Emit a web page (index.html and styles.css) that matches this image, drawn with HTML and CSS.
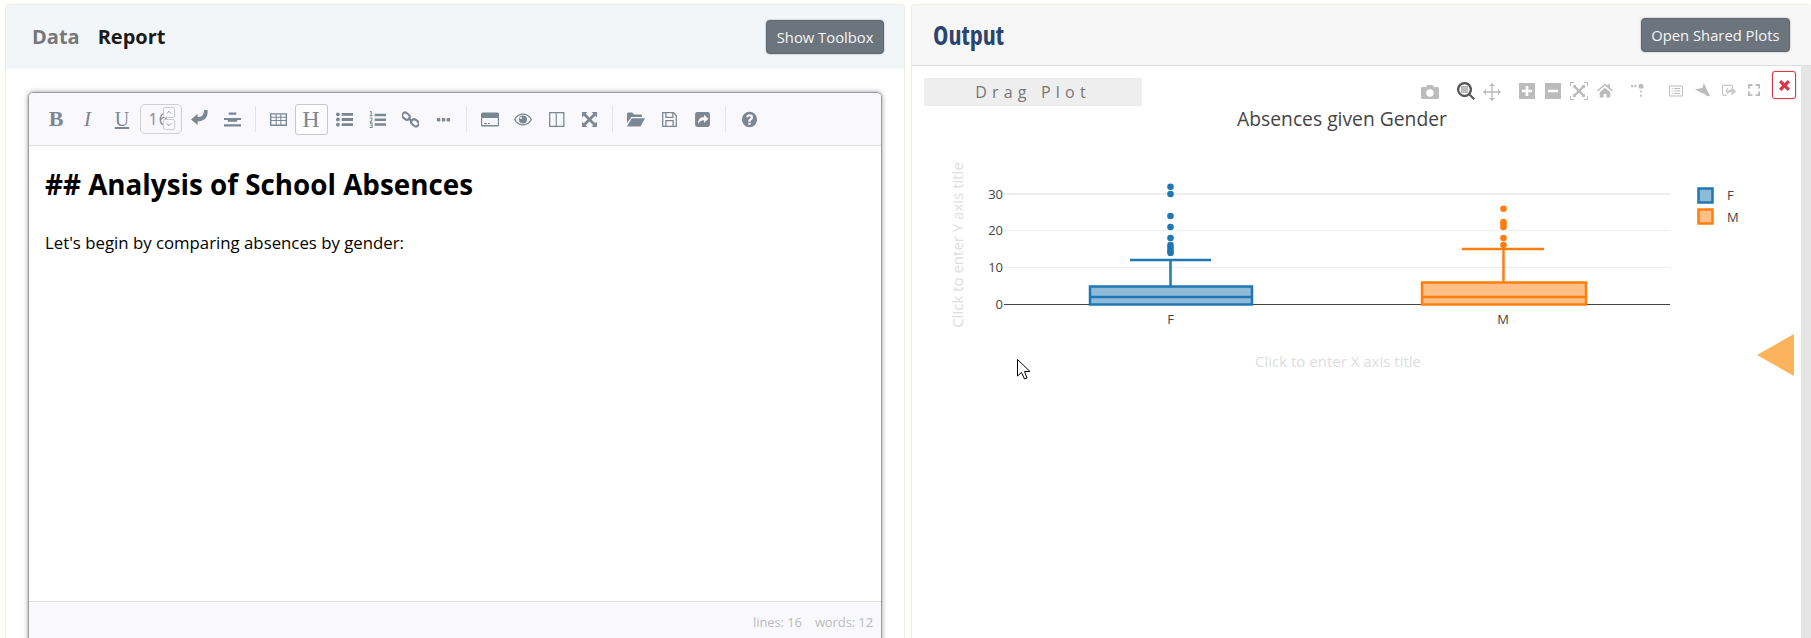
FILE: index.html
```html
<!DOCTYPE html>
<html lang="en">
<head>
<meta charset="utf-8">
<title>Report and Output</title>
<link rel="stylesheet" href="styles.css">
</head>
<body>
<main class="page">
  <section class="card left">
    <header class="head head-left">
      <nav class="tabs"><span class="tab muted">Data</span><span class="tab active">Report</span></nav>
      <button class="btn">Show Toolbox</button>
    </header>
    <div class="editor-wrap">
      <div class="editor">
        <div class="toolbar">
          <span class="tb t-serif"><b>B</b></span>
          <span class="tb t-serif t-i"><i>I</i></span>
          <span class="tb t-serif t-u">U</span>
          <span class="num"><span class="num-val">16</span><span class="spin"><span class="sp"><svg viewBox="0 0 10 6"><path d="M2 4.500 5 1.500 8 4.500"/></svg></span><span class="sp"><svg viewBox="0 0 10 6"><path d="M2 1.500 5 4.500 8 1.500"/></svg></span></span></span>
          <span class="tb"><svg class="ic ic-up" viewBox="0 0 18 18"><path d="M0 11 7 5V8.500C11 8.500 13 7.500 14 1H17.500C18.500 9 14 13 7 13V17Z"/></svg></span>
          <span class="tb"><svg class="ic" viewBox="0 0 18 18"><path d="M5 1.500h8v2.500H5zM0 7.500h18v2H0zM4 9.500h10v2H4zM0 14h18v2.500H0z"/></svg></span>
          <span class="sep sep-first"></span>
          <span class="tb"><svg class="ic" viewBox="0 0 16 16"><path fill-rule="evenodd" d="M0 2h16v12H0zM1.300 3.300v2.100h4v-2.100zM6.300 3.300v2.100h3.400v-2.100zM10.700 3.300v2.100h4v-2.100zM1.300 6.400v2.100h4v-2.100zM6.300 6.400v2.100h3.400v-2.100zM10.700 6.400v2.100h4v-2.100zM1.300 9.500v3.200h4v-3.200zM6.300 9.500v3.200h3.400v-3.200zM10.700 9.500v3.200h4v-3.200z"/></svg></span>
          <span class="tb tb-on t-serif t-h">H</span>
          <span class="tb"><svg class="ic" viewBox="0 0 18 18"><circle cx="2" cy="3.500" r="2"/><circle cx="2" cy="9" r="2"/><circle cx="2" cy="14.500" r="2"/><path d="M6 2h12v3H6zM6 7.500h12v3H6zM6 13h12v3H6z"/></svg></span>
          <span class="tb"><svg class="ic" viewBox="0 0 18 18"><path d="M6 3h12v2.500H6zM6 8h12v2.500H6zM6 13h12v2.500H6zM1 0h1.800v4.500H3.800V5.500H.8V4.500H1.800V1.200H1zM.8 7h2.800v3L2 11.500h1.800v1H.6v-1L2.600 9.500V8H.8zM.8 13h3v5H.8v-1H2.800v-1H1.600v-1H2.800v-1H.8z"/></svg></span>
          <span class="tb"><svg class="ic" viewBox="0 0 18 18"><g class="link"><rect x="0" y="2.500" width="8.500" height="6" rx="3" transform="rotate(40 4.250 5.500)"/><rect x="9.500" y="9.500" width="8.500" height="6" rx="3" transform="rotate(40 13.750 12.500)"/><path d="M6.500 7.500 11 11"/></g></svg></span>
          <span class="tb"><svg class="ic" viewBox="0 0 18 18"><rect x="2" y="7.500" width="3.600" height="3.600" rx=".8"/><rect x="7.200" y="7.500" width="3.600" height="3.600" rx=".8"/><rect x="12.400" y="7.500" width="3.600" height="3.600" rx=".8"/></svg></span>
          <span class="sep"></span>
          <span class="tb"><svg class="ic ic-w" viewBox="0 0 18 16"><path fill-rule="evenodd" d="M1.500 1h15A1.500 1.500 0 0 1 18 2.500v11a1.500 1.500 0 0 1-1.500 1.500h-15A1.500 1.500 0 0 1 0 13.500v-11A1.500 1.500 0 0 1 1.500 1zM1.200 6.500v7h15.600v-7zM3 11.500h3v1H3zM7 11.500h2v1H7z"/></svg></span>
          <span class="tb"><svg class="ic ic-w" viewBox="0 0 18 12"><path fill-rule="evenodd" d="M9 0c4 0 7.300 2.500 9 6-1.700 3.500-5 6-9 6s-7.300-2.500-9-6c1.700-3.500 5-6 9-6zM9 1.300C6 1.300 3 3 1.400 6 3 9 6 10.700 9 10.700S15 9 16.600 6C15 3 12 1.300 9 1.300zM9 2a4 4 0 1 1 0 8 4 4 0 0 1 0-8zM7 3.500a1 1 0 1 0 0 2 1 1 0 0 0 0-2z"/></svg></span>
          <span class="tb"><svg class="ic" viewBox="0 0 16 16"><path fill-rule="evenodd" d="M1 1h14.500v14H1zM2.200 2.200v11.600h5V2.200zM8.300 2.200v11.600h6V2.200z"/></svg></span>
          <span class="tb"><svg class="ic" viewBox="0 0 16 16"><path d="M1 1h5L4.400 2.600 8 6.200 11.600 2.600 10 1h5v5L13.400 4.400 9.800 8 13.400 11.600 15 10v5h-5l1.600-1.600L8 9.800 4.400 13.400 6 15H1v-5l1.600 1.600L6.200 8 2.600 4.400 1 6z"/></svg></span>
          <span class="sep"></span>
          <span class="tb"><svg class="ic ic-w" viewBox="0 0 18 14"><path d="M0 1.500C0 .7.700 0 1.500 0h3.700L7 2h6.500c.8 0 1.500.7 1.500 1.500V4.500H4.500L0 10.500zM4.800 5.800H18L13.500 14H0z"/></svg></span>
          <span class="tb"><svg class="ic" viewBox="0 0 16 16"><path fill-rule="evenodd" d="M1 1h11l3 3v11H1zM2.200 2.200v11.600h1.800V8.500h8v5.300h1.800V4.600L11.800 2.400V6.500H4V2.200zM5.200 2.200v3.100h5.400V2.200zM5.200 9.700v4.100h5.600V9.700z"/></svg></span>
          <span class="tb"><svg class="ic" viewBox="0 0 16 16"><path fill-rule="evenodd" d="M3 1h10a2 2 0 0 1 2 2v10a2 2 0 0 1-2 2H3a2 2 0 0 1-2-2V3a2 2 0 0 1 2-2zM9.500 3.500v2.300C6 5.800 3.500 7.500 4 12.500 5 10 6.500 8.700 9.500 8.700v2.300L13.500 7.200z"/></svg></span>
          <span class="sep"></span>
          <span class="tb"><svg class="ic" viewBox="0 0 16 16"><path fill-rule="evenodd" d="M8 .8a7.200 7.200 0 1 1 0 14.400A7.200 7.200 0 0 1 8 .8zM6.900 11v2h2.200v-2zM8 3C6.200 3 5 4 4.800 5.700l2 .4C7 5.300 7.300 4.900 8 4.900s1.100.4 1.100 1c0 .5-.3.8-1 1.300-.8.600-1.200 1.200-1.200 2.200V10h2.200v-.4c0-.5.200-.7.900-1.200.9-.6 1.400-1.300 1.400-2.500C11.400 4.200 10 3 8 3z"/></svg></span>
        </div>
        <div class="doc">
          <h1 class="doc-h">## Analysis of School Absences</h1>
          <p class="doc-p">Let's begin by comparing absences by gender:</p>
        </div>
        <div class="status"><span>lines: 16</span><span>words: 12</span></div>
      </div>
    </div>
  </section>

  <section class="card right">
    <header class="head head-right">
      <h2 class="output">Output</h2>
      <button class="btn">Open Shared Plots</button>
    </header>
    <div class="plot-area">
      <div class="drag">Drag Plot</div>
      <div class="modebar">
        <svg class="mb m-cam" viewBox="0 0 18 16"><path fill-rule="evenodd" d="M1.500 3H5L6.500 1h5L13 3h3.500C17.300 3 18 3.700 18 4.500v9c0 .8-.7 1.500-1.500 1.500h-15C.7 15 0 14.300 0 13.500v-9C0 3.700.7 3 1.500 3zM9 5.300a3.700 3.700 0 1 0 0 7.400 3.700 3.700 0 0 0 0-7.400z"/></svg>
        <svg class="mb m-zoom" viewBox="0 0 18 18"><path d="M7.500 0a7.500 7.500 0 0 1 6 12L18 16.500 16.500 18 12 13.500A7.500 7.500 0 1 1 7.500 0zM7.500 2.300a5.200 5.200 0 1 0 0 10.400 5.200 5.200 0 0 0 0-10.400z" fill-rule="evenodd"/><rect class="z-in" x="4" y="4" width="7" height="7"/></svg>
        <svg class="mb m-pan" viewBox="0 0 18 18"><path d="M9 0l3 3h-2.300v5.300H15V6l3 3-3 3V9.700H9.700V15H12l-3 3-3-3h2.300V9.700H3V12L0 9l3-3v2.300h5.300V3H6z"/></svg>
        <svg class="mb m-plus" viewBox="0 0 16 16"><path fill-rule="evenodd" d="M0 0h16v16H0zM6.700 3v3.700H3v2.600h3.700V13h2.600V9.300H13V6.700H9.300V3z"/></svg>
        <svg class="mb m-minus" viewBox="0 0 16 16"><path fill-rule="evenodd" d="M0 0h16v16H0zM3 6.700v2.600h10V6.700z"/></svg>
        <svg class="mb m-auto" viewBox="0 0 18 18"><path d="M0 0h4v1H1v3H0zM14 0h4v4h-1V1h-3zM0 14h1v3h3v1H0zM17 14h1v4h-4v-1h3zM3.500 3h3L5.600 3.900 9 7.200 12.400 3.900 11.500 3h3.500v3.500L14.100 5.600 10.800 9l3.300 3.400.9-.9V15h-3.500l.9-.9L9 10.800 5.600 14.100l.9.9H3v-3.500l.9.9L7.200 9 3.900 5.600 3 6.500z"/></svg>
        <svg class="mb m-home" viewBox="0 0 18 16"><path d="M9 0l3 2.600V1h2.500v3.800L18 8l-1 1.200L9 2.500 1 9.200 0 8zM3 10l6-5 6 5v6h-4.500v-4h-3v4H3z"/></svg>
        <svg class="mb m-spike" viewBox="0 0 18 18"><circle cx="12" cy="4" r="3"/><rect x="0" y="2.500" width="2.500" height="2.500"/><rect x="4" y="2.500" width="2.500" height="2.500"/><rect x="11" y="9" width="2" height="2.500"/><rect x="11" y="14" width="2" height="2.500"/></svg>
        <svg class="mb m-hover" viewBox="0 0 18 16"><path fill-rule="evenodd" d="M2 1h14a2 2 0 0 1 2 2v10a2 2 0 0 1-2 2H2a2 2 0 0 1-2-2V3a2 2 0 0 1 2-2zM2 2.200c-.5 0-.8.300-.8.800v10c0 .5.300.8.800.8h14c.5 0 .8-.3.8-.8V3c0-.5-.3-.8-.8-.8zM3.500 4H5v1.300H3.500zM6.500 4h8v1.300h-8zM3.500 7.300H5v1.300H3.500zM6.500 7.300h8v1.300h-8zM3.500 10.600H5v1.300H3.500zM6.500 10.600h8v1.300h-8z"/></svg>
        <svg class="mb m-comp" viewBox="0 0 18 18"><path d="M0 7.500 9 6 10.500 0 18 16 14.500 15.500 11 13 6.500 11.500z"/></svg>
        <svg class="mb m-lasso" viewBox="0 0 18 18"><path fill-rule="evenodd" d="M2 1h10a2 2 0 0 1 2 2v2h-1.200V3c0-.5-.3-.8-.8-.8H2c-.5 0-.8.300-.8.800v10c0 .5.300.8.800.8h4v1.200H2a2 2 0 0 1-2-2V3a2 2 0 0 1 2-2z"/><path class="lasso-in" d="M11 5.500h3l4 4-4 4h-3l2-3H9.500L7.500 13 4.500 9 7 5.500h1.500L6.500 9h1.500l1.500-2h3.500z"/></svg>
        <svg class="mb m-full" viewBox="0 0 16 16"><path d="M0 0h6v2.500H2.500V6H0zM10 0h6v6h-2.500V2.500H10zM0 10h2.500v3.500H6V16H0zM13.500 10H16v6h-6v-2.500h3.500z"/></svg>
        <button class="close"><svg viewBox="0 0 12 12"><path d="M2.500 0 6 3.500 9.500 0 12 2.500 8.500 6 12 9.500 9.500 12 6 8.500 2.500 12 0 9.500 3.500 6 0 2.500z"/></svg></button>
      </div>
      <svg class="chart" viewBox="0 0 890 573" width="890" height="573">
        <text class="title" x="430" y="59.500" text-anchor="middle">Absences given Gender</text>
        <g class="grid">
          <line x1="92" x2="758" y1="128" y2="128" class="g-strong"/>
          <line x1="92" x2="758" y1="164.500" y2="164.500"/>
          <line x1="92" x2="758" y1="201.500" y2="201.500"/>
        </g>
        <g class="ticks">
          <text x="91" y="132.500" text-anchor="end">30</text>
          <text x="91" y="168.500" text-anchor="end">20</text>
          <text x="91" y="205.500" text-anchor="end">10</text>
          <text x="91" y="242.500" text-anchor="end">0</text>
          <text x="258.500" y="258" text-anchor="middle">F</text>
          <text x="591" y="258" text-anchor="middle">M</text>
        </g>
        <line class="zero" x1="92" x2="758" y1="238.500" y2="238.500"/>
        <g class="box box-f">
          <rect x="178" y="220.500" width="162" height="18"/>
          <path d="M178 231H340M258.500 220V194M218 194H299"/>
          <circle cx="258.500" cy="120.700" r="3.300"/><circle cx="258.500" cy="128" r="3.300"/><circle cx="258.500" cy="150" r="3.300"/><circle cx="258.500" cy="161" r="3.300"/><circle cx="258.500" cy="172" r="3.300"/><circle cx="258.500" cy="179" r="3.300"/><circle cx="258.500" cy="182" r="3.300"/><circle cx="258.500" cy="185" r="3.300"/><circle cx="258.500" cy="187" r="3.300"/>
        </g>
        <g class="box box-m">
          <rect x="510" y="216.500" width="164" height="22"/>
          <path d="M510 231H674M591.500 216V183M550 183H632"/>
          <circle cx="591.500" cy="142.700" r="3.300"/><circle cx="591.500" cy="156" r="3.300"/><circle cx="591.500" cy="158" r="3.300"/><circle cx="591.500" cy="161" r="3.300"/><circle cx="591.500" cy="172" r="3.300"/><circle cx="591.500" cy="179" r="3.300"/>
        </g>
        <g class="box box-f"><rect x="786.500" y="122.500" width="14" height="14"/></g>
        <g class="box box-m"><rect x="786.500" y="143.500" width="14" height="14"/></g>
        <g class="ticks">
          <text x="815" y="134">F</text>
          <text x="815" y="156">M</text>
        </g>
        <text class="ph" x="426" y="301" text-anchor="middle">Click to enter X axis title</text>
        <text class="ph" transform="translate(51 179) rotate(-90)" text-anchor="middle">Click to enter Y axis title</text>
        <path class="tri" d="M845 289 882 268V310Z"/>
        <path class="cursor" d="M105.500 293.500V310L109.500 306.500 112.500 313 115 312 112.500 305.500H118Z"/>
      </svg>
    </div>
  </section>
</main>
</body>
</html>
```
FILE: styles.css
```css
* { box-sizing: border-box; }
html, body { margin: 0; height: 100%; overflow: hidden; background: #fffffb; }
body { font-family: "Open Sans", "Liberation Sans", sans-serif; }
.page { display: flex; gap: 6px; height: 638px; padding: 4px 0 0 5px; }
.card { background: #fff; border: 1px solid #eeeee2; border-bottom: 0; border-radius: 4px 4px 0 0; height: 660px; overflow: hidden; }
.left { width: 900px; flex: none; }
.right { flex: 1; min-width: 0; border-right: 0; position: relative; }
.head { display: flex; align-items: center; justify-content: space-between; }
.head-left { background: #f3f6f9; height: 64px; padding: 0 20px 0 26px; }
.head-right { background: #f7f7f7; height: 61px; border-bottom: 1px solid #ddd; padding: 0 21px 0 21px; }
.tabs { display: flex; gap: 18px; }
.tab { font-size: 20px; font-weight: 700; line-height: 26px; }
.muted { color: #777; }
.active { color: #1a1a1a; }
.btn { font-family: inherit; font-size: 14.800px; color: #f4f6f8; background: #6c757d; border: 1px solid #5f686f; border-radius: 4px; height: 34px; padding: 0 9.500px; box-shadow: 0 0 2px rgba(0,0,0,.35); }
.output { margin: 0; font-size: 26px; font-weight: 700; line-height: 32px; color: #2a4470; font-stretch: 75%; }
.editor-wrap { padding: 23px 0 0 22px; }
.editor { height: 570px; width: 854px; border: 1px solid #9a9a9a; border-radius: 5px; box-shadow: 0 0 5px rgba(0,0,0,.4); background: #fff; display: flex; flex-direction: column; overflow: hidden; }
.toolbar { height: 53px; background: #f9f9fd; border-bottom: 1px solid #ddd; display: flex; align-items: center; padding: 0 0 0 10.500px; color: #7b8793; flex: none; }
.tb { width: 33px; height: 31px; display: flex; align-items: center; justify-content: center; color: #7b8793; flex: none; }
.tb-on { border: 1px solid #c8c8c8; border-radius: 3px; background: #fdfdff; }
.t-serif { font-family: "Liberation Serif", serif; font-size: 22px; }
.t-i { padding-right: 3px; }
.t-u { text-decoration: underline; font-size: 20px; }
.t-h { font-size: 24px; }
.ic { width: 17px; height: 17px; fill: currentColor; }
.ic-up { transform: translateY(-2px); }
.ic-w { width: 18px; }
.link rect, .link path { fill: none; stroke: currentColor; stroke-width: 2.200; }
.sep { width: 1px; height: 26px; background: #e4e4e8; margin: 0 7px 0 6px; flex: none; }
.sep-first { margin-right: 6px; }
.num { width: 42px; height: 30px; margin: 0 1px; border: 1px solid #d0d0d0; border-radius: 5px; position: relative; overflow: hidden; font-size: 16px; color: #888; display: flex; align-items: center; padding-left: 8px; flex: none; }
.num-val { letter-spacing: 1px; }
.spin { position: absolute; right: 6px; top: 2px; display: flex; flex-direction: column; gap: 1px; }
.sp { width: 12px; height: 11px; border: 1px solid #ccc; border-radius: 2px; background: #fbfbff; display: flex; align-items: center; justify-content: center; }
.sp svg { width: 8px; height: 5px; fill: none; stroke: #888; stroke-width: 1; }
.doc { flex: 1; padding: 19px 16px; color: #000; }
.doc-h { margin: 0; font-size: 27.800px; line-height: 38px; font-weight: 700; }
.doc-p { margin: 29px 0 0; font-size: 16.800px; line-height: 22px; }
.status { height: 60px; flex: none; background: #f9f9fd; border-top: 1px solid #ddd; padding: 11px 8px 0 0; font-size: 13px; color: #bbb; display: flex; justify-content: flex-end; gap: 13px; letter-spacing: -.1px; }
.plot-area { position: relative; height: 600px; padding: 12px 0 0 12px; }
.plot-area::after { content: ""; position: absolute; right: 0; top: 0; bottom: 0; width: 10px; background: #e5e5e5; }
.drag { width: 218px; height: 28px; background: #eee; color: #777; font-size: 16px; letter-spacing: 5.200px; line-height: 28px; text-align: center; }
.chart { position: absolute; left: 0; top: 0; width: 890px; height: 573px; }
.title { font-size: 19.300px; fill: #444; }
.grid line { stroke: #eee; stroke-width: 1; }
.grid .g-strong { stroke-width: 2; }
.ticks text { font-size: 13px; fill: #444; }
.zero { stroke: #444; stroke-width: 1; }
.box rect { stroke-width: 2.500; }
.box path { fill: none; stroke-width: 2.500; }
.box-f rect { fill: rgba(31,119,180,.5); stroke: #1f77b4; }
.box-f path { stroke: #1f77b4; }
.box-f circle { fill: #1f77b4; }
.box-m rect { fill: rgba(255,127,14,.5); stroke: #ff7f0e; }
.box-m path { stroke: #ff7f0e; }
.box-m circle { fill: #ff7f0e; }
.ph { font-size: 15px; fill: #dedede; }
.tri { fill: #fbb45c; }
.cursor { fill: #fff; stroke: #000; stroke-width: 1; }
.modebar { position: absolute; z-index: 2; left: 0; top: 0; width: 890px; height: 40px; }
.mb { position: absolute; top: 18px; fill: #bcbcbc; }
.z-in { fill: #bcbcbc; }
.lasso-in { fill: #c8c8c8; }
.m-cam { left: 509px; width: 18px; height: 16px; }
.m-zoom { left: 545px; top: 16px; width: 18px; height: 18px; fill: #555; }
.m-pan { left: 571px; top: 17px; width: 18px; height: 18px; }
.m-plus { left: 607px; top: 17px; width: 16px; height: 16px; }
.m-minus { left: 633px; top: 17px; width: 16px; height: 16px; }
.m-auto { left: 658px; top: 16px; width: 18px; height: 18px; }
.m-home { left: 685px; top: 17px; width: 16px; height: 15px; }
.m-spike { left: 719px; top: 17px; width: 15px; height: 15px; }
.m-hover { left: 757px; top: 18px; width: 14px; height: 14px; }
.m-comp { left: 783px; top: 17px; width: 15px; height: 15px; }
.m-lasso { left: 810px; top: 18px; width: 14px; height: 14px; }
.m-full { left: 836px; top: 18px; width: 12px; height: 12px; }
.close { position: absolute; left: 860px; top: 5px; width: 24px; height: 28px; background: #fff; border: 1px solid #d83a4a; border-radius: 3px; padding: 0; display: flex; align-items: center; justify-content: center; box-shadow: 0 0 2px rgba(220,53,69,.4); z-index: 3; }
.close svg { width: 11px; height: 11px; fill: #dc3545; }
```
